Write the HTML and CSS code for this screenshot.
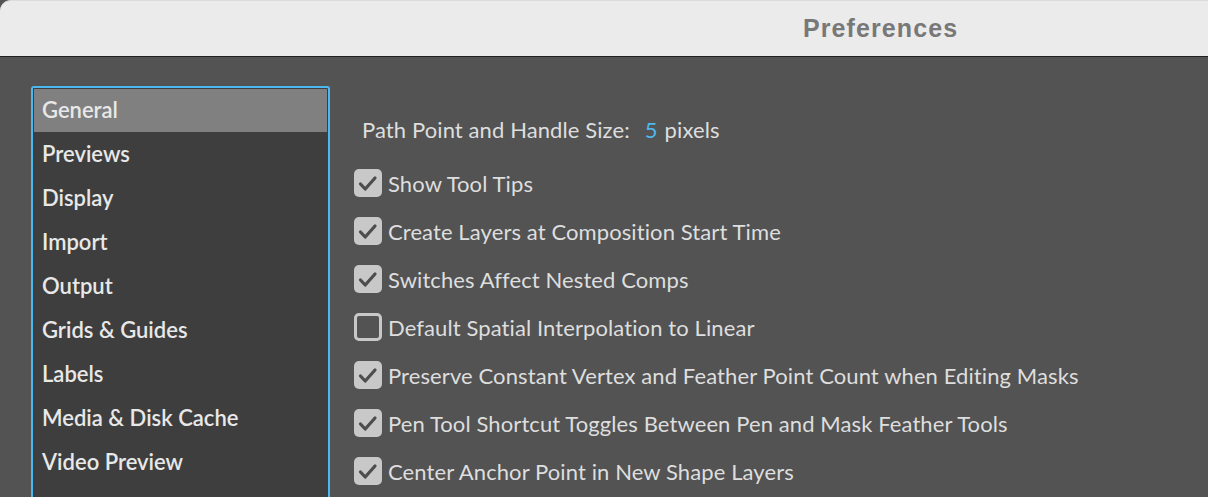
FILE: index.html
```html
<!DOCTYPE html>
<html lang="en">
<head>
<meta charset="utf-8">
<title>Preferences</title>
<link rel="stylesheet" href="styles.css">
</head>
<body>
<div class="window">
  <header class="titlebar"><span class="title">Preferences</span></header>
  <div class="main">
    <nav class="sidebar">
      <ul class="nav-list">
        <li class="nav-item selected">General</li>
        <li class="nav-item">Previews</li>
        <li class="nav-item">Display</li>
        <li class="nav-item">Import</li>
        <li class="nav-item">Output</li>
        <li class="nav-item">Grids &amp; Guides</li>
        <li class="nav-item">Labels</li>
        <li class="nav-item">Media &amp; Disk Cache</li>
        <li class="nav-item">Video Preview</li>
      </ul>
    </nav>
    <section class="content">
      <div class="size-row">Path Point and Handle Size:<span class="value">5</span>pixels</div>
      <div class="options">
        <label class="option"><span class="box checked"><svg viewBox="0 0 28 28"><path d="M6.5 15 L11.2 20 L21 9"/></svg></span>Show Tool Tips</label>
        <label class="option"><span class="box checked"><svg viewBox="0 0 28 28"><path d="M6.5 15 L11.2 20 L21 9"/></svg></span>Create Layers at Composition Start Time</label>
        <label class="option"><span class="box checked"><svg viewBox="0 0 28 28"><path d="M6.5 15 L11.2 20 L21 9"/></svg></span>Switches Affect Nested Comps</label>
        <label class="option"><span class="box"></span>Default Spatial Interpolation to Linear</label>
        <label class="option"><span class="box checked"><svg viewBox="0 0 28 28"><path d="M6.5 15 L11.2 20 L21 9"/></svg></span>Preserve Constant Vertex and Feather Point Count when Editing Masks</label>
        <label class="option"><span class="box checked"><svg viewBox="0 0 28 28"><path d="M6.5 15 L11.2 20 L21 9"/></svg></span>Pen Tool Shortcut Toggles Between Pen and Mask Feather Tools</label>
        <label class="option"><span class="box checked"><svg viewBox="0 0 28 28"><path d="M6.5 15 L11.2 20 L21 9"/></svg></span>Center Anchor Point in New Shape Layers</label>
      </div>
    </section>
  </div>
</div>
</body>
</html>
```
FILE: styles.css
```css
html, body {
  margin: 0;
  padding: 0;
  background: #535353;
  overflow: hidden;
}
.window {
  width: 1208px;
  height: 497px;
  overflow: hidden;
  font-family: "Lato", "Open Sans", sans-serif;
  color: #e4e4e4;
}
.titlebar {
  background: #ebebeb;
  border-top: 1px solid #dcdcdc;
  border-top-left-radius: 11px;
  border-bottom: 1px solid #222222;
  box-sizing: border-box;
  height: 57px;
  display: flex;
  align-items: center;
  padding-left: 803px;
  padding-bottom: 1px;
}
.title {
  font-family: "Liberation Sans", Arial, sans-serif;
  font-weight: 700;
  font-size: 25px;
  letter-spacing: 1.1px;
  color: #787878;
}
.main {
  display: flex;
  padding: 29px 0 0 31px;
  background: #535353;
}
.sidebar {
  width: 299px;
  height: 440px;
  box-sizing: border-box;
  border: 2px solid #4cb8f0;
  border-bottom: none;
  border-radius: 3px 3px 0 0;
  background: #3e3e3e;
  padding: 1px 1px 0 1px;
  flex-shrink: 0;
}
.nav-list {
  list-style: none;
  margin: 0;
  padding: 0;
}
.nav-item {
  height: 44px;
  line-height: 42px;
  padding-left: 8px;
  font-size: 22px;
  font-weight: 600;
  color: #e8e8e8;
}
.nav-item.selected {
  background: #808080;
  height: 43px;
  margin-bottom: 1px;
}
.content {
  padding: 30px 0 0 24px;
}
.size-row {
  height: 28px;
  line-height: 28px;
  font-size: 22px;
  letter-spacing: 0.1px;
  padding-left: 8px;
  color: #dedede;
}
.value {
  color: #4fb7ee;
  margin: 0 7px 0 15px;
}
.options {
  margin-top: 25px;
  display: flex;
  flex-direction: column;
  gap: 20px;
}
.option {
  display: flex;
  align-items: center;
  height: 28px;
  font-size: 22px;
  letter-spacing: 0.1px;
  color: #dedede;
  white-space: nowrap;
}
.box {
  width: 28px;
  height: 28px;
  box-sizing: border-box;
  border: 3px solid #c8c8c8;
  border-radius: 5px;
  margin-right: 6px;
  flex-shrink: 0;
  display: flex;
}
.box.checked {
  background: #c8c8c8;
  border: none;
}
.box svg {
  width: 28px;
  height: 28px;
}
.box svg path {
  fill: none;
  stroke: #4d4d4d;
  stroke-width: 3.2;
  stroke-linecap: round;
  stroke-linejoin: round;
}
```
